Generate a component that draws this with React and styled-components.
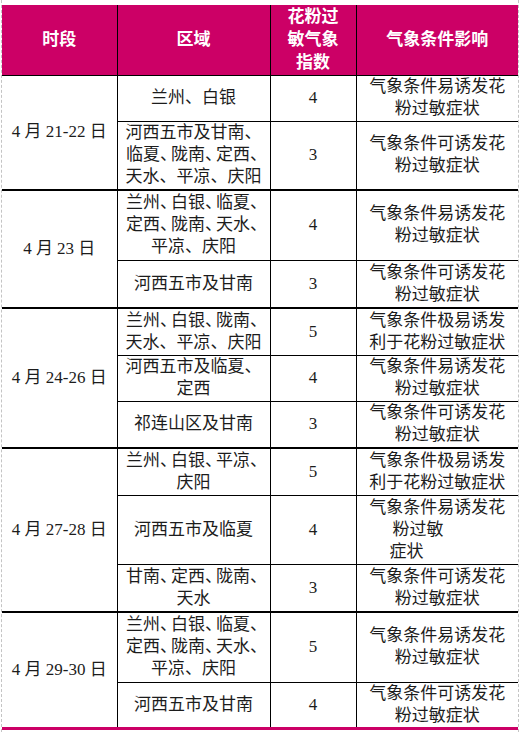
import React from 'react';
import styled, { createGlobalStyle } from 'styled-components';

const GlobalStyle = createGlobalStyle`
  html, body {
    margin: 0;
    padding: 0;
    background: #fff;
  }
`;

const Frame = styled.div`
  width: 516px;
  min-height: 727px;
  margin-left: 1px;
  padding-top: 5px;
  border-left: 1px dashed #c4c4c4;
  border-right: 1px dashed #c4c4c4;
`;

const Table = styled.table`
  width: 516px;
  table-layout: fixed;
  border-collapse: collapse;
  font-family: "Liberation Serif", "Noto Sans CJK SC", serif;
  font-size: 17px;
  line-height: 22px;
  color: #1c1c1c;
  border-bottom: 3px solid #cc0066;
`;

const HeadRow = styled.tr`
  height: 70px;
  border-bottom: 1px solid #000;
`;

const HeadCell = styled.th`
  padding: 0;
  background: #cc0066;
  color: #fff;
  font-weight: bold;
  line-height: 23px;
  border-left: 1px solid #000;
  &:first-child {
    border-left: none;
  }
`;

const Row = styled.tr`
  height: ${(p) => p.$h}px;
  border-top: ${(p) => (p.$group ? 2 : 1)}px solid #000;
`;

const Cell = styled.td`
  padding: 0;
  text-align: center;
  vertical-align: middle;
  border-left: ${(p) => (p.$first ? 'none' : '1px solid #000')};
`;

const Line = styled.span`
  display: block;
  white-space: nowrap;
  text-align: ${(p) => (p.$indent ? 'left' : 'center')};
  padding-left: ${(p) => p.$indent || 0}px;
`;

const Dun = styled.span`
  display: inline-block;
  width: 11px;
  text-align: left;
`;

const groups = [
  {
    date: '4 月 21-22 日',
    rows: [
      { area: ['兰州、白银'], idx: 4, effect: ['气象条件易诱发花', '粉过敏症状'], h: 46 },
      {
        area: ['河西五市及甘南、', '临夏、陇南、定西、', '天水、平凉、庆阳'],
        idx: 3,
        effect: ['气象条件可诱发花', '粉过敏症状'],
        h: 69,
      },
    ],
  },
  {
    date: '4 月 23 日',
    rows: [
      {
        area: ['兰州、白银、临夏、', '定西、陇南、天水、', '平凉、庆阳'],
        idx: 4,
        effect: ['气象条件易诱发花', '粉过敏症状'],
        h: 70,
      },
      { area: ['河西五市及甘南'], idx: 3, effect: ['气象条件可诱发花', '粉过敏症状'], h: 48 },
    ],
  },
  {
    date: '4 月 24-26 日',
    rows: [
      {
        area: ['兰州、白银、陇南、', '天水、平凉、庆阳'],
        idx: 5,
        effect: ['气象条件极易诱发', '利于花粉过敏症状'],
        h: 47,
      },
      { area: ['河西五市及临夏、', '定西'], idx: 4, effect: ['气象条件易诱发花', '粉过敏症状'], h: 46 },
      { area: ['祁连山区及甘南'], idx: 3, effect: ['气象条件可诱发花', '粉过敏症状'], h: 47 },
    ],
  },
  {
    date: '4 月 27-28 日',
    rows: [
      {
        area: ['兰州、白银、平凉、', '庆阳'],
        idx: 5,
        effect: ['气象条件极易诱发', '利于花粉过敏症状'],
        h: 47,
      },
      {
        area: ['河西五市及临夏'],
        idx: 4,
        effect: ['气象条件易诱发花', '粉过敏', '症状'],
        indents: [0, 36, 33],
        h: 69,
      },
      { area: ['甘南、定西、陇南、', '天水'], idx: 3, effect: ['气象条件可诱发花', '粉过敏症状'], h: 48 },
    ],
  },
  {
    date: '4 月 29-30 日',
    rows: [
      {
        area: ['兰州、白银、临夏、', '定西、陇南、天水、', '平凉、庆阳'],
        idx: 5,
        effect: ['气象条件易诱发花', '粉过敏症状'],
        h: 70,
      },
      { area: ['河西五市及甘南'], idx: 4, effect: ['气象条件可诱发花', '粉过敏症状'], h: 46 },
    ],
  },
];

// lines with nine glyphs get their 、 squeezed, as the source document does
const renderLine = (text, i, indent) => {
  const tight = text.length >= 9;
  if (!tight) {
    return (
      <Line key={i} $indent={indent}>
        {text}
      </Line>
    );
  }
  const parts = text.split('、');
  return (
    <Line key={i} $indent={indent}>
      {parts.map((part, j) => (
        <React.Fragment key={j}>
          {part}
          {j < parts.length - 1 && <Dun>、</Dun>}
        </React.Fragment>
      ))}
    </Line>
  );
};

export default function App() {
  return (
    <Frame>
      <GlobalStyle />
      <Table>
        <colgroup>
          <col style={{ width: 115 }} />
          <col style={{ width: 153 }} />
          <col style={{ width: 86 }} />
          <col style={{ width: 162 }} />
        </colgroup>
        <thead>
          <HeadRow>
            <HeadCell>时段</HeadCell>
            <HeadCell>区域</HeadCell>
            <HeadCell>
              <Line>花粉过</Line>
              <Line>敏气象</Line>
              <Line>指数</Line>
            </HeadCell>
            <HeadCell>气象条件影响</HeadCell>
          </HeadRow>
        </thead>
        <tbody>
          {groups.map((g, gi) =>
            g.rows.map((r, ri) => (
              <Row key={`${gi}-${ri}`} $h={r.h} $group={ri === 0 && gi > 0}>
                {ri === 0 && (
                  <Cell $first rowSpan={g.rows.length}>
                    {g.date}
                  </Cell>
                )}
                <Cell>{r.area.map((t, i) => renderLine(t, i))}</Cell>
                <Cell>{r.idx}</Cell>
                <Cell>{r.effect.map((t, i) => renderLine(t, i, r.indents && r.indents[i]))}</Cell>
              </Row>
            ))
          )}
        </tbody>
      </Table>
    </Frame>
  );
}
